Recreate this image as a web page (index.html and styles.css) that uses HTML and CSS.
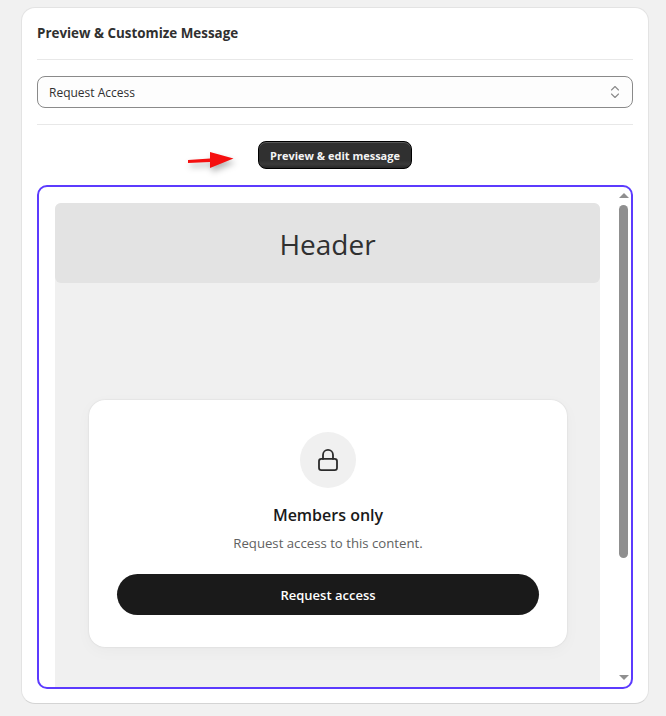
FILE: index.html
```html
<!DOCTYPE html>
<html lang="en">
<head>
<meta charset="utf-8">
<title>Preview &amp; Customize Message</title>
<link rel="stylesheet" href="styles.css">
</head>
<body>
<main class="panel">
  <h2 class="panel-title">Preview &amp; Customize Message</h2>
  <hr class="rule rule-top">
  <div class="select">
    <span>Request Access</span>
    <svg class="select-icon" width="10" height="14" viewBox="0 0 10 14" fill="none" stroke="#8a8a8a" stroke-width="1.100" stroke-linecap="round" stroke-linejoin="round"><path d="M1.500 5 5 1.500 8.500 5"/><path d="M1.500 9 5 12.500 8.500 9"/></svg>
  </div>
  <hr class="rule rule-bottom">
  <div class="action">
    <svg class="arrow" width="70" height="36" viewBox="0 0 70 36"><path d="M10 21 32 19.500 32 13 55.500 19.500 32 29 32 23 10 24Z" fill="#f50f0f"/></svg>
    <button class="edit-btn" type="button">Preview &amp; edit message</button>
  </div>
  <section class="frame">
    <div class="viewport">
      <div class="preview">
        <div class="preview-header">Header</div>
        <div class="preview-body">
          <div class="gate">
            <div class="lock">
              <svg width="24" height="24" viewBox="0 0 24 24" fill="none" stroke="#2b2b2b" stroke-width="1.800" stroke-linecap="round" stroke-linejoin="round"><rect x="3" y="10.900" width="18" height="11.200" rx="2.400"/><path d="M7 10.900V6.900a5 5 0 0 1 10 0v4"/></svg>
            </div>
            <h3 class="gate-title">Members only</h3>
            <p class="gate-text">Request access to this content.</p>
            <button class="gate-btn" type="button">Request access</button>
          </div>
        </div>
      </div>
    </div>
    <div class="scrollbar">
      <span class="tri tri-up"></span>
      <span class="thumb"></span>
      <span class="tri tri-down"></span>
    </div>
  </section>
</main>
</body>
</html>
```

FILE: styles.css
```css
* { box-sizing: border-box; }
html, body { height: 100%; }
body {
  margin: 0;
  padding: 7px 17px 12px 21px;
  background: #f1f1f1;
  font-family: "Open Sans", "Noto Sans", sans-serif;
  color: #303030;
}
.panel {
  height: 697px;
  background: #fff;
  border: 1px solid #e3e3e3;
  border-bottom-color: #d4d4d4;
  border-radius: 14px;
  padding: 15px 15px 14px;
  display: flex;
  flex-direction: column;
}
.panel-title {
  margin: 0;
  height: 20px;
  font-size: 13.400px;
  line-height: 20px;
  font-weight: 700;
  color: #303030;
}
.rule {
  width: 100%;
  margin: 0;
  border: 0;
  border-top: 1px solid #e8e8e8;
}
.rule-top { margin-top: 16px; }
.rule-bottom { margin-top: 16px; }
.select {
  margin-top: 16px;
  height: 32px;
  flex: none;
  border: 1px solid #8a8a8a;
  border-radius: 8px;
  background: #fdfdfd;
  padding: 0 12px 0 11px;
  display: flex;
  align-items: center;
  justify-content: space-between;
  font-size: 12px;
  color: #303030;
}
.action {
  position: relative;
  margin-top: 16px;
  display: flex;
  justify-content: center;
  flex: none;
}
.arrow {
  position: absolute;
  left: 141px;
  top: -2px;
  filter: drop-shadow(2px 4px 3px rgba(0,0,0,.3));
}
.edit-btn {
  width: 154px;
  height: 28px;
  padding: 0;
  border: 1px solid #000;
  border-radius: 8px;
  background: linear-gradient(#303030 70%, #3a3a3a 85%, #262626);
  box-shadow: inset 0 1px 0 rgba(255,255,255,.2);
  font: 700 11px "Open Sans", sans-serif;
  color: #f4f4f4;
}
.frame {
  margin-top: 16px;
  flex: 1;
  min-height: 0;
  display: flex;
  border: 2px solid #5c3bfe;
  border-radius: 10px;
  overflow: hidden;
  background: #fff;
}
.viewport {
  flex: 1;
  min-width: 0;
  padding: 16px 16px 0 16px;
  overflow: hidden;
}
.preview {
  height: 100%;
  background: #f0f0f0;
  border-radius: 6px 6px 0 0;
  display: flex;
  flex-direction: column;
}
.preview-header {
  height: 80px;
  flex: none;
  padding-top: 1px;
  background: #e3e3e3;
  border-radius: 6px;
  display: flex;
  align-items: center;
  justify-content: center;
  font-size: 28px;
  color: #303030;
}
.preview-body {
  padding: 117px 33px 0 34px;
}
.gate {
  height: 247px;
  background: #fff;
  border-radius: 16px;
  box-shadow: 0 0 2px rgba(0,0,0,.12), 0 4px 16px rgba(0,0,0,.03);
  padding: 32px 28px 0;
  display: flex;
  flex-direction: column;
  align-items: center;
}
.lock {
  width: 56px;
  height: 56px;
  flex: none;
  border-radius: 50%;
  background: #f0f0f0;
  display: flex;
  align-items: center;
  justify-content: center;
}
.gate-title {
  margin: 16px 0 0;
  height: 22px;
  font-size: 16px;
  line-height: 22px;
  font-weight: 600;
  color: #1a1a1a;
}
.gate-text {
  margin: 8px 0 0;
  height: 18px;
  font-size: 13.200px;
  line-height: 18px;
  color: #616161;
}
.gate-btn {
  margin-top: 22px;
  width: 100%;
  height: 41px;
  flex: none;
  border: 0;
  border-radius: 21px;
  background: #1a1a1a;
  font: 600 13px "Open Sans", sans-serif;
  color: #fff;
}
.scrollbar {
  width: 15px;
  flex: none;
  padding: 6px 0 7px;
  display: flex;
  flex-direction: column;
  align-items: center;
}
.tri {
  width: 0;
  height: 0;
  flex: none;
  border-left: 5px solid transparent;
  border-right: 5px solid transparent;
}
.tri-up { border-bottom: 5px solid #8f8f8f; }
.tri-down { margin-top: auto; border-top: 5px solid #8f8f8f; }
.thumb {
  margin-top: 7px;
  width: 9px;
  height: 353px;
  flex: none;
  border-radius: 5px;
  background: #8f8f8f;
}
```
